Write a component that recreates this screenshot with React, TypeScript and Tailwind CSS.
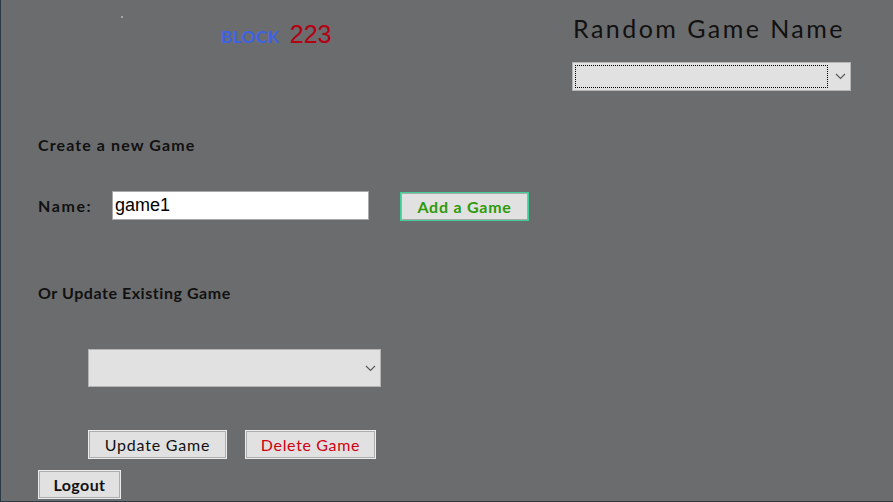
import React from "react";

const font = { fontFamily: "Lato, 'DejaVu Sans', sans-serif" };

function Chevron() {
  return (
    <svg width="11" height="7" viewBox="0 0 11 7" fill="none">
      <path d="M1 1 L5.5 5.5 L10 1" stroke="#5a5a5a" strokeWidth="1.2" />
    </svg>
  );
}

function FakeSelect({
  className,
  focused,
}: {
  className: string;
  focused?: boolean;
}) {
  return (
    <div
      className={`flex items-center bg-[#e1e1e1] border border-[#b4b4b4] ${className}`}
    >
      <div className="flex-1 h-full p-[2px]">
        {focused && (
          <div className="h-full border border-dotted border-black" />
        )}
      </div>
      <div className="w-[20px] flex justify-center">
        <Chevron />
      </div>
    </div>
  );
}

function Btn({
  children,
  className,
}: {
  children: React.ReactNode;
  className: string;
}) {
  return (
    <button
      type="button"
      className={`flex items-center justify-center bg-[#e1e1e1] border border-[#ececec] shadow-[inset_0_0_0_1px_#adadad] ${className}`}
    >
      {children}
    </button>
  );
}

export default function App() {
  return (
    <div
      style={font}
      className="w-[893px] h-[502px] bg-[#6b6c6e] border-l border-b border-[#2b3945] overflow-hidden text-[#111]"
    >
      <div className="flex">
        <div className="relative pl-[220px] pt-[16px] flex items-baseline gap-[10px]">
          <span className="absolute left-[120px] top-[16px] w-[2px] h-[2px] bg-[#a5a5a5]" />
          <span className="text-[17px] font-bold text-[#3d63e8] tracking-[0.5px]">
            BLOCK
          </span>
          <span
            className="text-[25px] text-[#b30012]"
            style={{ fontFamily: "'Liberation Sans', sans-serif" }}
          >
            223
          </span>
        </div>
        <div className="ml-auto mr-[42px] pt-[12px] w-[279px]">
          <div className="text-[25px] leading-[32px] pl-[1px] tracking-[2.45px]">
            Random Game Name
          </div>
          <FakeSelect className="mt-[18px] h-[29px]" focused />
        </div>
      </div>

      <div className="pl-[37px]">
        <div className="mt-[44px] text-[16px] font-bold leading-[20px] tracking-[1.1px]">
          Create a new Game
        </div>

        <div className="mt-[35px] flex items-center">
          <span className="w-[74px] text-[16px] font-bold tracking-[1.6px]">
            Name:
          </span>
          <input
            type="text"
            defaultValue="game1"
            className="w-[257px] h-[29px] bg-white border border-[#a8a8a8] px-[2px] text-[18px] text-black outline-none"
            style={{ fontFamily: "'Liberation Sans', sans-serif" }}
          />
          <button
            type="button"
            className="ml-[31px] mt-[2px] w-[129px] h-[29px] bg-[#e1e1e1] border border-[#3fcf98] shadow-[inset_0_0_0_1px_#a9a9a9] text-[16px] font-bold text-[#2e9a0a] tracking-[0.75px]"
          >
            Add a Game
          </button>
        </div>

        <div className="mt-[62px] text-[16px] font-bold leading-[20px] tracking-[0.55px]">
          Or Update Existing Game
        </div>

        <div className="pl-[50px]">
          <FakeSelect className="mt-[46px] w-[293px] h-[38px]" />

          <div className="mt-[43px] flex gap-[18px]">
            <Btn className="w-[139px] h-[29px] text-[16px] tracking-[0.8px]">
              Update Game
            </Btn>
            <Btn className="w-[131px] h-[29px] text-[16px] text-[#d0000f] tracking-[0.65px]">
              Delete Game
            </Btn>
          </div>
        </div>

        <Btn className="mt-[11px] w-[83px] h-[29px] text-[16px] font-bold tracking-[0.4px]">
          Logout
        </Btn>
      </div>
    </div>
  );
}
